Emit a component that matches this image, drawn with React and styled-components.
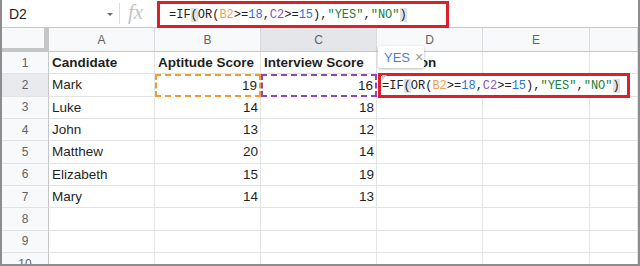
import React from 'react'
import styled, { createGlobalStyle } from 'styled-components'

const GlobalStyle = createGlobalStyle`
  html, body { margin: 0; padding: 0; background: #ffffff; }
  body { font-family: "Liberation Sans", Arial, sans-serif; }
`

const columns = ['A', 'B', 'C', 'D', 'E', '']
const rows = [
  ['Candidate', 'Aptitude Score', 'Interview Score', 'Decision'],
  ['Mark', 19, 16],
  ['Luke', 14, 18],
  ['John', 13, 12],
  ['Matthew', 20, 14],
  ['Elizabeth', 15, 19],
  ['Mary', 14, 13],
  [], [], [],
]

// Formula: colour coded tokens, as sheets shows them
const tokens = [
  ['=IF', 'plain'], ['(', 'match'], ['OR(', 'plain'], ['B2', 'orange'], ['>=', 'plain'],
  ['18', 'num'], [',', 'plain'], ['C2', 'purple'], ['>=', 'plain'], ['15', 'num'],
  ['),', 'plain'], ['"YES"', 'str'], [',', 'plain'], ['"NO"', 'str'], [')', 'match'],
]

const Formula = () => (
  <FormulaText>
    {tokens.map(([t, kind], i) => <Tok key={i} $kind={kind}>{t}</Tok>)}
  </FormulaText>
)

const Frame = styled.div`
  width: 640px;
  height: 266px;
  box-sizing: border-box;
  border: 2px solid #8d8d8d;
  border-top: none;
  overflow: hidden;
  display: flex;
  flex-direction: column;
  background: #fff;
`

const FormulaBar = styled.div`
  height: 27px;
  flex: none;
  display: flex;
  align-items: stretch;
  border-bottom: 1px solid #c8c8c8;
`

const NameBox = styled.div`
  width: 104px;
  padding-left: 7px;
  padding-right: 6px;
  display: flex;
  align-items: center;
  justify-content: space-between;
  font-size: 14px;
  color: #202124;
  border-right: 1px solid #dadce0;
  margin: 3px 0 3px 0;
`

const Caret = styled.span`
  width: 0;
  height: 0;
  border-left: 3px solid transparent;
  border-right: 3px solid transparent;
  border-top: 3px solid #6b6b6b;
  margin-top: 2px;
`

const Fx = styled.div`
  width: 37px;
  padding-right: 6px;
  box-sizing: border-box;
  display: flex;
  align-items: center;
  justify-content: center;
  font-family: "Liberation Serif", "Times New Roman", serif;
  font-style: italic;
  font-size: 21px;
  color: #c4c4c4;
  padding-bottom: 2px;
`

const FormulaBox = styled.div`
  width: 292px;
  box-sizing: border-box;
  margin-top: 1px;
  margin-bottom: -1px;
  border: 3px solid #dc1f2a;
  display: flex;
  align-items: center;
  padding-left: 9px;
  background: #fff;
`

const FormulaText = styled.span`
  font-family: "Liberation Mono", "DejaVu Sans Mono", monospace;
  font-size: 12px;
  color: #202124;
  white-space: nowrap;
`

const tokColor = {
  plain: '#202124', match: '#202124', orange: '#f2a14e',
  purple: '#8a56b0', num: '#2f6fd8', str: '#188038',
}

const Tok = styled.span`
  color: ${p => tokColor[p.$kind]};
  background: ${p => (p.$kind === 'match' ? '#dfe1e5' : 'transparent')};
`

const Sheet = styled.div`
  position: relative;
  flex: 1;
  display: grid;
  grid-template-columns: 47px 106px 106px 116px 106px 107px 1fr;
  grid-template-rows: 24px;
  grid-auto-rows: 22.33px;
  overflow: hidden;
`

const Corner = styled.div`
  background: #f8f9fa;
  border-right: 5px solid #c4c7c5;
  border-bottom: 4px solid #c4c7c5;
  box-sizing: border-box;
`

const ColHead = styled.div`
  background: ${p => (p.$active ? '#e4e6e9' : '#f8f9fa')};
  border-right: 1px solid #d7d9dc;
  border-bottom: 1px solid #c4c7c5;
  display: flex;
  align-items: center;
  justify-content: center;
  font-size: 12px;
  color: #5f6368;
  padding-top: 1px;
`

const RowHead = styled.div`
  background: ${p => (p.$active ? '#e8eaed' : '#f8f9fa')};
  border-right: 1px solid #c4c7c5;
  border-bottom: 1px solid #e0e2e4;
  display: flex;
  align-items: center;
  justify-content: center;
  font-size: 12px;
  color: #5f6368;
`

const dashColor = { orange: '#f29a33', purple: '#8f47b3' }

const Cell = styled.div`
  box-sizing: border-box;
  border-right: 1px solid #e2e3e3;
  border-bottom: 1px solid #e2e3e3;
  ${p => p.$dash && `border: 2px dashed ${dashColor[p.$dash]};`}
  display: flex;
  align-items: center;
  justify-content: ${p => (p.$num ? 'flex-end' : 'flex-start')};
  padding: 0 2px 0 3px;
  font-size: 13.5px;
  font-weight: ${p => (p.$bold ? 700 : 400)};
  color: #1f1f1f;
  white-space: nowrap;
  overflow: hidden;
`

const Tip = styled.div`
  position: absolute;
  left: 376px;
  top: 18px;
  width: 46px;
  height: 22px;
  box-sizing: border-box;
  background: #fff;
  border-radius: 2px;
  box-shadow: 0 1px 3px rgba(0, 0, 0, 0.28);
  display: flex;
  align-items: center;
  gap: 5px;
  padding-left: 6px;
  font-size: 13px;
  color: #4a7fd8;
  z-index: 3;
`

const TipClose = styled.span`
  color: #9a9a9a;
  font-size: 14px;
`

const Editor = styled.div`
  position: absolute;
  left: 376px;
  top: 45px;
  width: 252px;
  height: 25px;
  box-sizing: border-box;
  border: 3px solid #dc1f2a;
  background: #fff;
  display: flex;
  align-items: center;
  padding-left: 1px;
  z-index: 2;
`

const Notch = styled.span`
  position: absolute;
  left: 1px;
  top: -1px;
  border-left: 5px solid #c8c8c8;
  border-bottom: 5px solid transparent;
`

export default function App() {
  return (
    <>
      <GlobalStyle />
      <Frame>
        <FormulaBar>
          <NameBox>D2<Caret /></NameBox>
          <Fx>fx</Fx>
          <FormulaBox><Formula /></FormulaBox>
        </FormulaBar>
        <Sheet>
          <Corner />
          {columns.map((c, i) => <ColHead key={i} $active={c === 'C'}>{c}</ColHead>)}
          {rows.map((r, ri) => (
            <React.Fragment key={ri}>
              <RowHead $active={ri === 1}>{ri + 1}</RowHead>
              {columns.map((_, ci) => {
                const v = r[ci]
                const num = typeof v === 'number'
                let dash
                if (ri === 1 && ci === 1) dash = 'orange'
                if (ri === 1 && ci === 2) dash = 'purple'
                return (
                  <Cell key={ci} $num={num} $bold={ri === 0} $dash={dash}>
                    {v}
                  </Cell>
                )
              })}
            </React.Fragment>
          ))}
          <Tip>YES<TipClose>×</TipClose></Tip>
          <Editor><Notch /><Formula /></Editor>
        </Sheet>
      </Frame>
    </>
  )
}
